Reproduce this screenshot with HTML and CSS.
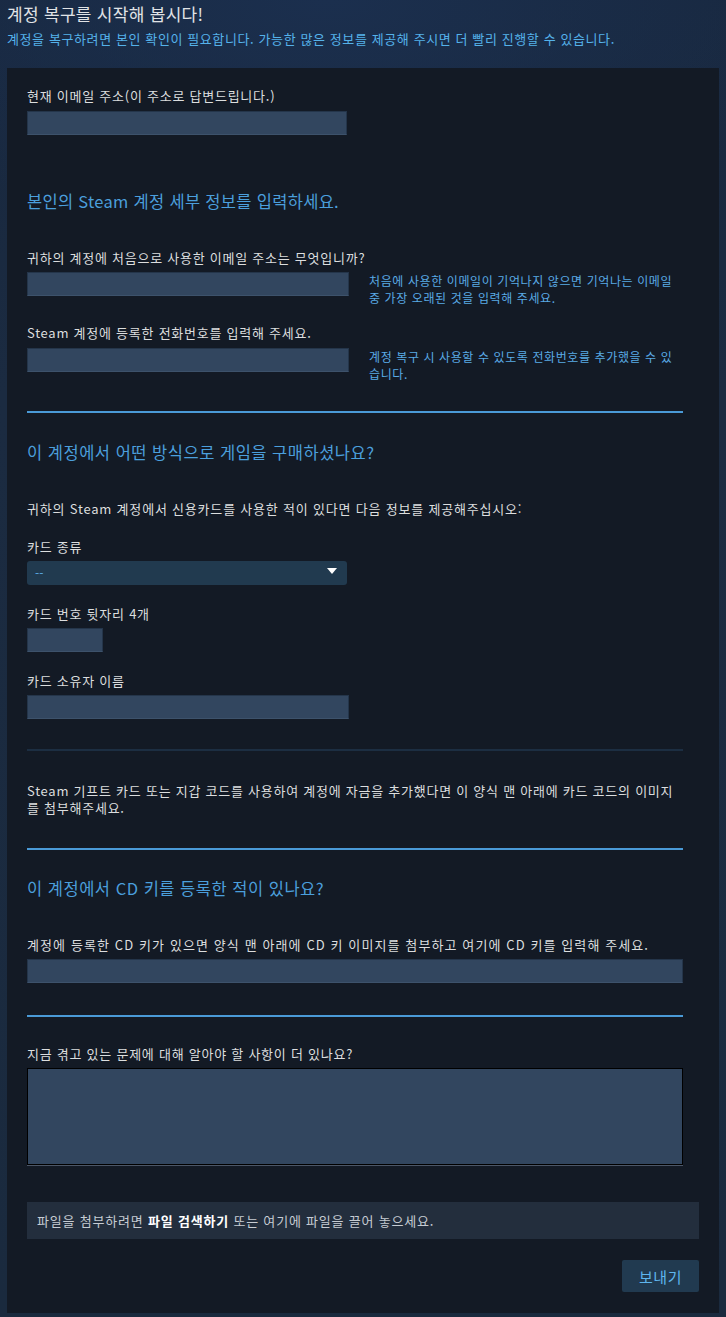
FILE: index.html
```html
<!DOCTYPE html>
<html lang="ko">
<head>
<meta charset="utf-8">
<title>계정 복구</title>
<link rel="stylesheet" href="styles.css">
</head>
<body>
<header class="page-head">
  <h1 class="title">계정 복구를 시작해 봅시다!</h1>
  <p class="subtitle">계정을 복구하려면 본인 확인이 필요합니다. 가능한 많은 정보를 제공해 주시면 더 빨리 진행할 수 있습니다.</p>
</header>
<main class="panel">
  <div class="form">
    <label class="label">현재 이메일 주소(이 주소로 답변드립니다.)</label>
    <div class="input w320"></div>

    <h2 class="heading h-first">본인의 Steam 계정 세부 정보를 입력하세요.</h2>

    <label class="label l-after-heading">귀하의 계정에 처음으로 사용한 이메일 주소는 무엇입니까?</label>
    <div class="row">
      <div class="input w322"></div>
      <p class="hint">처음에 사용한 이메일이 기억나지 않으면 기억나는 이메일 중 가장 오래된 것을 입력해 주세요.</p>
    </div>

    <label class="label l-row2">Steam 계정에 등록한 전화번호를 입력해 주세요.</label>
    <div class="row">
      <div class="input w322"></div>
      <p class="hint">계정 복구 시 사용할 수 있도록 전화번호를 추가했을 수 있습니다.</p>
    </div>

    <hr class="sep sep-a">

    <h2 class="heading">이 계정에서 어떤 방식으로 게임을 구매하셨나요?</h2>
    <p class="text t-after-heading">귀하의 Steam 계정에서 신용카드를 사용한 적이 있다면 다음 정보를 제공해주십시오:</p>

    <label class="label l-card">카드 종류</label>
    <div class="select w320"><span class="select-val">--</span><span class="arrow"></span></div>

    <label class="label l-card">카드 번호 뒷자리 4개</label>
    <div class="input w76"></div>

    <label class="label l-card">카드 소유자 이름</label>
    <div class="input w322"></div>

    <hr class="sep-thin">

    <p class="text para">Steam 기프트 카드 또는 지갑 코드를 사용하여 계정에 자금을 추가했다면 이 양식 맨 아래에 카드 코드의 이미지를 첨부해주세요.</p>

    <hr class="sep sep-b">

    <h2 class="heading">이 계정에서 CD 키를 등록한 적이 있나요?</h2>

    <label class="label l-after-heading l-wide">계정에 등록한 CD 키가 있으면 양식 맨 아래에 CD 키 이미지를 첨부하고 여기에 CD 키를 입력해 주세요.</label>
    <div class="input wfull"></div>

    <hr class="sep sep-c">

    <label class="label l-more">지금 겪고 있는 문제에 대해 알아야 할 사항이 더 있나요?</label>
    <div class="textarea"></div>
  </div>

  <div class="attach">파일을 첨부하려면 <strong>파일 검색하기</strong> 또는 여기에 파일을 끌어 놓으세요.</div>

  <div class="actions"><button class="send" type="button">보내기</button></div>
</main>
</body>
</html>
```

FILE: styles.css
```css
* { box-sizing: border-box; }

html, body {
  margin: 0;
  padding: 0;
}

body {
  width: 726px;
  min-height: 1317px;
  font-family: "Noto Sans CJK KR", "Noto Sans", sans-serif;
  color: #dcdedf;
  background-color: #1b2a3f;
  background-image:
    radial-gradient(ellipse 520px 240px at 45% 0%, #1b2f4e 0%, rgba(27, 47, 78, 0) 100%),
    linear-gradient(180deg, #18283f 0%, #1b2b41 30%, #1a2a3e 100%);
  overflow: hidden;
}

.page-head {
  padding: 3px 0 0 7px;
  height: 68px;
}

.title {
  margin: 0;
  font-size: 17px;
  line-height: 22px;
  font-weight: 400;
  color: #e0e3e6;
  letter-spacing: 0.3px;
}

.subtitle {
  margin: 5px 0 0;
  font-size: 13px;
  line-height: 18px;
  color: #55b2ea;
  letter-spacing: 0.6px;
}

.panel {
  margin-left: 7px;
  width: 712px;
  background: #131a25;
  padding: 19px 20px 21px 20px;
}

.form {
  margin-right: 16px;
}

.label {
  display: block;
  font-size: 13px;
  line-height: 18px;
  margin-bottom: 6px;
  color: #dcdedf;
  letter-spacing: 0.75px;
}

.l-wide { letter-spacing: 1.1px; }

.text {
  margin: 0;
  font-size: 13px;
  line-height: 18px;
  color: #dcdedf;
  letter-spacing: 0.8px;
}

.input {
  height: 24px;
  background: #32465f;
  border: 1px solid #24354a;
  border-bottom-color: #3d526b;
}

.w320 { width: 320px; }
.w322 { width: 322px; }
.w76 { width: 76px; }
.wfull { width: 100%; }

.heading {
  margin: 0;
  font-size: 16.5px;
  line-height: 22px;
  font-weight: 400;
  color: #4b9fdc;
  letter-spacing: 0.5px;
}

.h-first { margin-top: 55px; letter-spacing: 0.3px; }
.l-after-heading { margin-top: 37px; margin-bottom: 5px; }
.l-row2 { margin-top: 18px; margin-bottom: 6px; }
.l-card { margin-top: 20px; margin-bottom: 5px; }
.t-after-heading { margin-top: 37px; margin-bottom: 1px; }
.l-more { margin-top: 28px; margin-bottom: 5px; }

.row {
  display: flex;
  align-items: flex-start;
  gap: 20px;
}

.row .input { flex: none; }

.hint {
  margin: 0;
  flex: 1;
  font-size: 12px;
  line-height: 17px;
  color: #5aabe5;
  letter-spacing: 0.6px;
}

.sep {
  border: 0;
  height: 2px;
  background: #4a9ad7;
  margin: 0;
}

.sep-a { margin-top: 29px; margin-bottom: 28px; }
.sep-b { margin-top: 32px; margin-bottom: 27px; }
.sep-c { margin-top: 32px; margin-bottom: 0; }

.sep-thin {
  border: 0;
  height: 2px;
  background: #1c2e42;
  margin: 30px 0 31px;
}

.para {
  line-height: 17px;
  letter-spacing: 0.75px;
}

.select {
  position: relative;
  height: 24px;
  background: #213a4f;
  border-radius: 3px;
  padding-left: 8px;
  display: flex;
  align-items: center;
}

.select-val {
  font-size: 12px;
  color: #5aabe5;
  line-height: 1;
}

.arrow {
  position: absolute;
  right: 10px;
  top: 7px;
  width: 0;
  height: 0;
  border-left: 5px solid transparent;
  border-right: 5px solid transparent;
  border-top: 6px solid #ffffff;
}

.textarea {
  height: 97px;
  background: #32465f;
  border: 1px solid #000000;
  box-shadow: 0 1px 0 #4b5667;
}

.attach {
  margin-top: 37px;
  height: 37px;
  background: #232e3d;
  padding-left: 10px;
  display: flex;
  align-items: center;
  font-size: 13px;
  color: #c6ccd3;
  letter-spacing: 0.8px;
  white-space: pre;
}

.attach strong {
  font-weight: 700;
  color: #ffffff;
}

.actions {
  display: flex;
  justify-content: flex-end;
  margin-top: 21px;
}

.send {
  width: 77px;
  height: 32px;
  border: 0;
  border-radius: 2px;
  background: #213a50;
  color: #5eb5ee;
  font-family: "Noto Sans CJK KR", "Noto Sans", sans-serif;
  font-size: 15px;
  letter-spacing: 0.5px;
  padding: 0;
  cursor: pointer;
}
```
